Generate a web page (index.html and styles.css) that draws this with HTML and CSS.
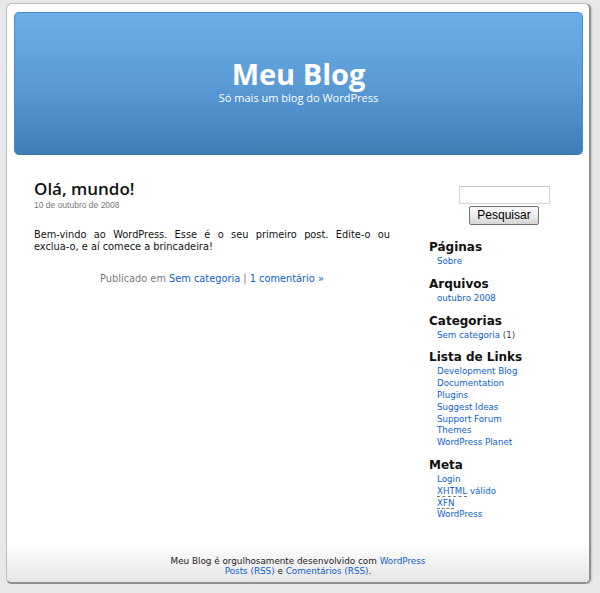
FILE: index.html
```html
<!DOCTYPE html>
<html lang="pt-BR">
<head>
<meta charset="utf-8">
<title>Meu Blog</title>
<link rel="stylesheet" href="styles.css">
</head>
<body>
<div class="page">
  <header class="header">
    <h1 class="blog-title">Meu Blog</h1>
    <div class="blog-desc">Só mais um blog do WordPress</div>
  </header>
  <div class="main">
    <div class="content">
      <div class="post">
        <h2 class="post-title">Olá, mundo!</h2>
        <div class="post-date">10 de outubro de 2008</div>
        <p class="entry">Bem-vindo ao WordPress. Esse é o seu primeiro post. Edite-o ou <span class="nowrap">exclua-o,</span> e aí comece a brincadeira!</p>
        <p class="postmeta">Publicado em <a href="#">Sem categoria</a> | <a href="#">1 comentário »</a></p>
      </div>
    </div>
    <aside class="sidebar">
      <form class="search">
        <input class="search-input" type="text">
        <button class="search-btn" type="button">Pesquisar</button>
      </form>
      <h3 class="side-h">Páginas</h3>
      <ul class="side-list"><li><a href="#">Sobre</a></li></ul>
      <h3 class="side-h">Arquivos</h3>
      <ul class="side-list"><li><a href="#">outubro 2008</a></li></ul>
      <h3 class="side-h">Categorias</h3>
      <ul class="side-list"><li><a href="#">Sem categoria</a> (1)</li></ul>
      <h3 class="side-h">Lista de Links</h3>
      <ul class="side-list">
        <li><a href="#">Development Blog</a></li>
        <li><a href="#">Documentation</a></li>
        <li><a href="#">Plugins</a></li>
        <li><a href="#">Suggest Ideas</a></li>
        <li><a href="#">Support Forum</a></li>
        <li><a href="#">Themes</a></li>
        <li><a href="#">WordPress Planet</a></li>
      </ul>
      <h3 class="side-h">Meta</h3>
      <ul class="side-list">
        <li><a href="#">Login</a></li>
        <li><a href="#"><abbr class="abbr">XHTML</abbr> válido</a></li>
        <li><a href="#"><abbr class="abbr">XFN</abbr></a></li>
        <li><a href="#">WordPress</a></li>
      </ul>
    </aside>
  </div>
  <footer class="footer">
    <div>Meu Blog é orgulhosamente desenvolvido com <a href="#">WordPress</a></div>
    <div><a href="#">Posts (RSS)</a> e <a href="#">Comentários (RSS)</a>.</div>
  </footer>
</div>
</body>
</html>
```
FILE: styles.css
```css
html, body {
  margin: 0;
  padding: 0;
}
body {
  background: #e8e8e8;
  font-family: "DejaVu Sans", Verdana, sans-serif;
  color: #222;
  padding: 3px 0 0 6px;
}
a {
  color: #0b5fcc;
  text-decoration: none;
}
.nowrap {
  white-space: nowrap;
}
.page {
  box-sizing: border-box;
  width: 585px;
  height: 581px;
  background: #fff;
  border: 1px solid #bdbdbd;
  border-right: 2px solid #8f8f8f;
  border-bottom: 2px solid #8f8f8f;
  border-radius: 6px;
  box-shadow: 1px 1px 2px rgba(0,0,0,0.15);
  display: flex;
  flex-direction: column;
  overflow: hidden;
}
.header {
  box-sizing: border-box;
  margin: 8px 0 0 7px;
  width: 569px;
  height: 143px;
  border: 1px solid #4a8ad0;
  border-bottom-color: #3a72aa;
  border-radius: 5px;
  background: linear-gradient(#6aafe8, #5a9bd8 50%, #3f7eb7);
  text-align: center;
  color: #fff;
  padding-top: 46px;
}
.blog-title {
  margin: 0;
  font-family: "Open Sans", sans-serif;
  font-weight: 700;
  font-size: 29px;
  line-height: 29px;
  letter-spacing: 0;
}
.blog-desc {
  margin-top: 3px;
  font-family: "Open Sans", sans-serif;
  font-size: 11px;
  line-height: 13px;
}
.main {
  display: flex;
  padding: 24px 0 0 27px;
}
.content {
  width: 356px;
}
.post-title {
  margin: 0;
  font-family: "Open Sans", sans-serif;
  font-weight: 600;
  font-size: 17px;
  line-height: 20px;
  color: #111;
}
.post-date {
  font-family: "Liberation Sans", Arial, sans-serif;
  font-size: 8.5px;
  line-height: 11px;
  color: #777;
  margin-top: 1px;
}
.entry {
  margin: 18px 0 0;
  font-size: 9.8px;
  line-height: 12px;
  text-align: justify;
  color: #111;
}
.postmeta {
  margin: 20px 0 0;
  font-size: 9.8px;
  line-height: 12px;
  text-align: center;
  color: #777;
}
.sidebar {
  margin-left: 39px;
  width: 150px;
  padding-top: 7px;
}
.search {
  display: flex;
  flex-direction: column;
  align-items: center;
  margin: 0 0 15px;
}
.search-input {
  box-sizing: border-box;
  width: 91px;
  height: 18px;
  margin: 0 0 2px;
  padding: 0;
  border: 1px solid #d4d4d4;
  border-top-color: #c4c4c4;
  background: #fff;
}
.search-btn {
  box-sizing: border-box;
  width: 70px;
  height: 19px;
  padding: 0;
  border: 1px solid #6f6f6f;
  border-radius: 2px;
  background: linear-gradient(#fbfbfb, #e9e9e9 60%, #d4d4d4);
  font-family: "Liberation Sans", Arial, sans-serif;
  font-size: 12px;
  line-height: 17px;
  color: #000;
}
.side-h {
  margin: 0 0 2px;
  font-size: 12px;
  line-height: 14px;
  font-weight: 700;
  color: #111;
}
.side-list {
  list-style: none;
  margin: 0 0 9px;
  padding: 0 0 0 8px;
  font-size: 8.7px;
  line-height: 11.8px;
  color: #444;
}
.abbr {
  text-decoration: none;
  border-bottom: 1px dashed #777;
}
.footer {
  margin-top: auto;
  padding: 12px 0 6px;
  background: linear-gradient(#fff, #f4f4f4 40%, #e6e6e6);
  text-align: center;
  font-size: 8.8px;
  line-height: 10px;
  color: #222;
}
```
